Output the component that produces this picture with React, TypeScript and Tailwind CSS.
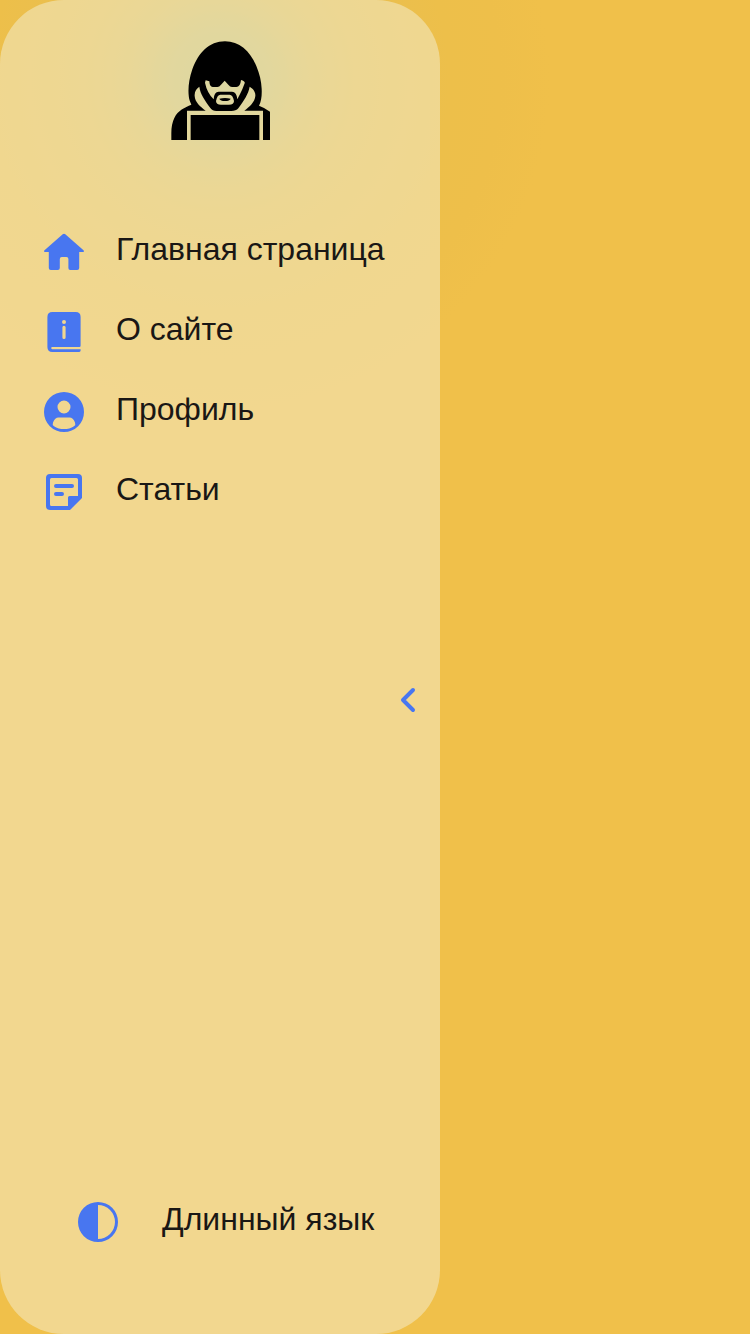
import type { ReactNode } from "react";

function Icon({ children }: { children: ReactNode }) {
  return (
    <svg viewBox="0 0 40 40" className="h-10 w-10 shrink-0" fill="#4876f0" aria-hidden="true">
      {children}
    </svg>
  );
}

const HomeIcon = () => (
  <Icon>
    <path d="M18.7 2.3Q20 1.2 21.3 2.3L39.5 18.2Q40.8 19.8 39 20H35.2V36Q35.2 38 33.2 38H26.2Q24.4 38 24.4 36V27Q24.4 25 22.4 25H17.8Q15.8 25 15.8 27V36Q15.8 38 13.8 38H6.8Q4.8 38 4.8 36V20H1Q-.8 19.8.5 18.2Z" />
  </Icon>
);

const BookIcon = () => (
  <Icon>
    <path
      fillRule="evenodd"
      d="M8.4 0H31.6Q36.6 0 36.6 5V33.8Q36.6 35 35.4 35H8.2Q7.2 35 7.2 36T8.2 37.2H36.6V38.6Q36.6 40 35.2 40H8.4Q3.4 40 3.4 35V5Q3.4 0 8.4 0ZM20 8A2 2 0 1 0 20 12A2 2 0 1 0 20 8ZM18.4 15.3V25.4A1.6 1.6 0 0 0 21.6 25.4V15.3A1.6 1.6 0 0 0 18.4 15.3Z"
    />
  </Icon>
);

const ProfileIcon = () => (
  <Icon>
    <path
      fillRule="evenodd"
      d="M20 0A20 20 0 1 1 20 40A20 20 0 1 1 20 0ZM20 8.5A6.5 6.5 0 1 0 20 21.5A6.5 6.5 0 1 0 20 8.5ZM14.5 25.5Q11 25.5 9 30.5Q8 33 10 34.2C15.5 38 24.5 38 30 34.2Q32 33 31 30.5Q29 25.5 25.5 25.5Z"
    />
  </Icon>
);

const ArticleIcon = () => (
  <Icon>
    <path
      fillRule="evenodd"
      d="M6 2H34Q38 2 38 6V26L26 38H6Q2 38 2 34V6Q2 2 6 2ZM7.5 6Q6 6 6 7.5V32.5Q6 34 7.5 34H24V25.5Q24 24 25.5 24H34V7.5Q34 6 32.5 6Z"
    />
    <path d="M12 14H28M12 22H18" fill="none" stroke="#4876f0" strokeWidth="4" strokeLinecap="round" />
  </Icon>
);

const ThemeIcon = () => (
  <Icon>
    <path fillRule="evenodd" d="M20 0A20 20 0 1 1 20 40A20 20 0 1 1 20 0ZM20 3V37A17 17 0 0 0 20 3Z" />
  </Icon>
);

const HoodedFigure = () => (
  <svg viewBox="33 33 297 297" className="h-[99px] w-[99px]" aria-hidden="true">
    <path
      fillRule="evenodd"
      d="M195 34C147 34 116 68 97 118C87 146 84 175 86 195C87 211 92 217 94 224C74 233 54 240 43 264Q34 282 34 309V330H81V242H137C121 230 105 217 104 198C103 184 110 175 118 170C121 193 134 210 151 234Q157 243 169 243H214Q228 243 235 235C252 211 265 193 269 170C278 175 287 184 286 198C284 217 269 230 253 242H309V330H330V245Q316 234 297 227C304 214 306 195 305 176C304 154 299 132 289 108C271 64 238 34 195 34ZM137 151L148 154Q149 171 158 171H172Q178 171 183 164L194 152L205 164Q210 171 216 171H229Q241 171 243 150Q256 154 254 160L247 178Q241 191 232 208Q230 185 216 185H176Q162 185 161 208Q141 188 135 158ZM181 194Q172 194 168 213Q168 224 183 224H207Q222 224 222 213Q218 194 209 194Z"
    />
    <path d="M178 206Q195 202 212 206Q209 213 195 213T178 206Z" />
    <path d="M92 255H298V330H92Z" />
  </svg>
);

const items = [
  { label: "Главная страница", icon: <HomeIcon /> },
  { label: "О сайте", icon: <BookIcon /> },
  { label: "Профиль", icon: <ProfileIcon /> },
  { label: "Статьи", icon: <ArticleIcon /> },
];

export default function App() {
  return (
    <div className="h-[1334px] w-full bg-[#f0c04a] bg-[radial-gradient(circle_at_220px_80px,#c9bf6b_0px,#d3bf64_50px,#e0bf58_90px,#e7bf50_135px,#ebbf4d_190px,#edbf4a_230px,#eebf4a_280px,#f0c04a_330px)] font-['Liberation_Sans',sans-serif] text-[32px] leading-[40px] text-[#1a1715]">
      <aside className="flex h-full w-[440px] flex-col rounded-[64px] bg-[#f4f3e4]/45">
        <header className="flex h-[212px] justify-center pt-[41px]">
          <HoodedFigure />
        </header>
        <nav>
          <ul className="flex flex-col gap-10 pl-11 pt-5">
            {items.map(({ label, icon }) => (
              <li key={label}>
                <a href="#" className="flex h-10 items-center gap-8">
                  {icon}
                  <span className="-mt-[7px] whitespace-nowrap">{label}</span>
                </a>
              </li>
            ))}
          </ul>
        </nav>
        <button className="mr-[25px] mt-[176px] self-end" aria-label="Свернуть меню">
          <svg viewBox="0 0 14 24" className="h-6 w-[14px] overflow-visible" fill="none">
            <path d="M12 2L2 12L12 22" stroke="#4876f0" strokeWidth="4" strokeLinecap="round" strokeLinejoin="round" />
          </svg>
        </button>
        <button className="mb-[92px] ml-[78px] mt-auto flex h-10 items-center gap-11">
          <ThemeIcon />
          <span className="-mt-[7px] whitespace-nowrap">Длинный язык</span>
        </button>
      </aside>
    </div>
  );
}
